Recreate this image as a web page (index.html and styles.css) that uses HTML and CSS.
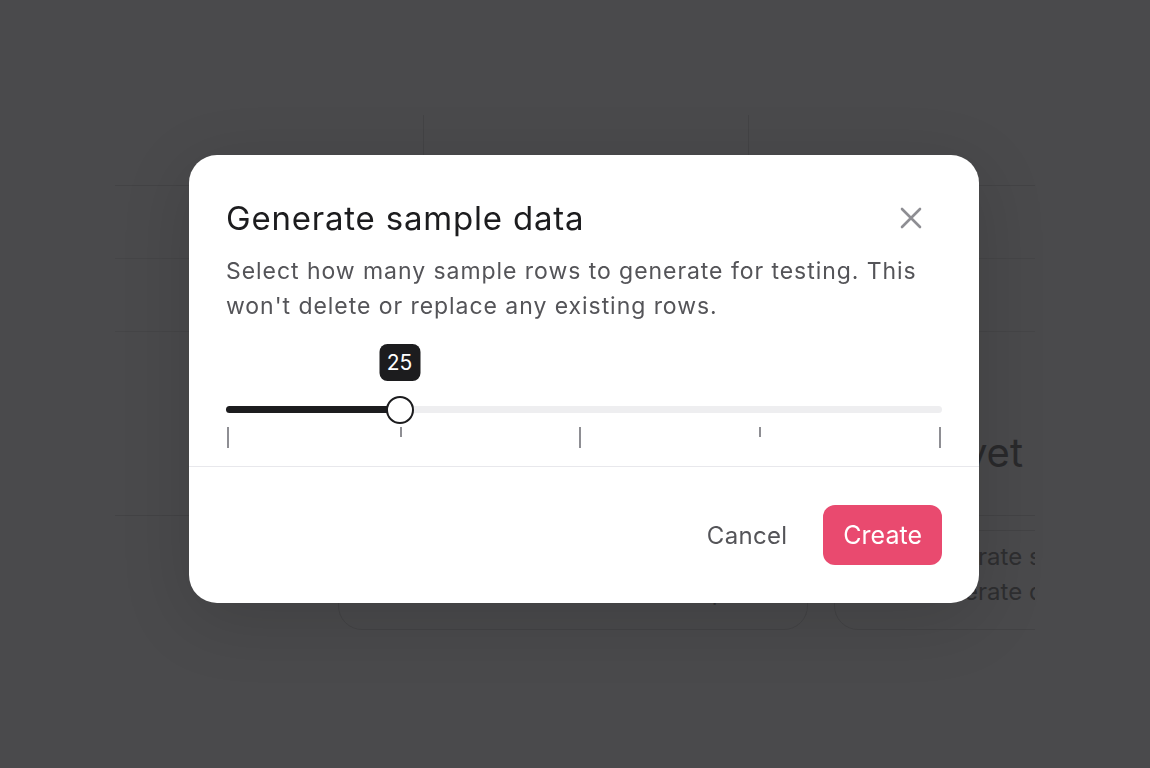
FILE: index.html
```html
<!DOCTYPE html>
<html>
<head>
    <title>Generate sample data</title>
    <link rel="stylesheet" href="styles.css">
</head>
<body>
    <div class="page">
        <div class="stats">
            <div class="stat stat-a"></div>
            <div class="stat stat-b"></div>
            <div class="stat stat-c"></div>
        </div>
        <div class="row"></div>
        <div class="row"></div>
        <div class="empty">
            <h2>You don't have any rows yet</h2>
        </div>
        <div class="cards">
            <div class="card">
                <p>Generate sample rows</p>
                <p>Generate data from a template</p>
            </div>
            <div class="card">
                <p>Generate sample rows</p>
                <p>Generate data from a template</p>
            </div>
        </div>
    </div>

    <div class="overlay">
        <div class="modal">
            <div class="modal-body">
                <div class="modal-header">
                    <h1 class="modal-title">Generate sample data</h1>
                    <button class="close-btn" aria-label="Close">
                        <svg width="22" height="22" viewBox="0 0 22 22">
                            <path d="M2 2 L20 20 M20 2 L2 20" stroke="#8e8e93" stroke-width="2.6" stroke-linecap="round" fill="none"/>
                        </svg>
                    </button>
                </div>
                <p class="modal-text">Select how many sample rows to generate for testing. This won't delete or replace any existing rows.</p>

                <div class="slider">
                    <div class="tooltip-row">
                        <div class="tooltip" style="left: 24.24%">25</div>
                    </div>
                    <div class="track">
                        <div class="track-fill" style="width: 24.24%"></div>
                        <div class="thumb" style="left: 24.24%"></div>
                    </div>
                    <div class="ticks">
                        <span class="tick" style="left: 0%"></span>
                        <span class="tick short" style="left: 24.24%"></span>
                        <span class="tick" style="left: 49.49%"></span>
                        <span class="tick short" style="left: 74.75%"></span>
                        <span class="tick" style="left: 100%"></span>
                    </div>
                </div>
            </div>
            <div class="modal-footer">
                <button class="cancel-btn">Cancel</button>
                <button class="create-btn">Create</button>
            </div>
        </div>
    </div>
</body>
</html>
```

FILE: styles.css
```css
body {
    margin: 0;
    height: 768px;
    overflow: hidden;
    background: #4a4a4c;
    font-family: Inter, "Noto Sans", sans-serif;
}

/* dimmed page behind the dialog */
.page {
    width: 920px;
    height: 768px;
    margin: 0 auto;
    padding-top: 115px;
    box-sizing: border-box;
    overflow: hidden;
}

.stats {
    display: flex;
    height: 70px;
    border-bottom: 1px solid #434345;
}

.stat-a {
    width: 308px;
    border-right: 1px solid #434345;
}

.stat-b {
    width: 324px;
    border-right: 1px solid #434345;
}

.stat-c {
    flex: 1;
}

.row {
    height: 72px;
    border-bottom: 1px solid #454547;
}

.empty {
    height: 184px;
    border-bottom: 1px solid #434345;
    box-sizing: border-box;
    padding-top: 97px;
}

.empty h2 {
    margin: 0;
    font-size: 40px;
    line-height: 48px;
    font-weight: 400;
    color: #29292b;
    text-align: right;
    padding-right: 12px;
    white-space: nowrap;
}

.cards {
    display: flex;
    gap: 26px;
    margin-top: 14px;
    padding-left: 223px;
}

.card {
    flex: 0 0 470px;
    height: 100px;
    box-sizing: border-box;
    border: 1px solid #434345;
    border-radius: 24px;
    padding: 8px 0 0 83px;
    overflow: hidden;
}

.card p {
    margin: 0;
    font-size: 24px;
    line-height: 35px;
    color: #2e2e30;
    white-space: nowrap;
}

/* dialog */
.overlay {
    position: fixed;
    inset: 0;
    display: flex;
    align-items: flex-start;
    padding: 155px 0 0 189px;
}

.modal {
    width: 790px;
    background: #fff;
    border-radius: 28px;
    box-shadow: 0 16px 70px rgba(0, 0, 0, 0.14);
    overflow: hidden;
}

.modal-body {
    padding: 43px 37px 0;
}

.modal-header {
    display: flex;
    align-items: center;
    justify-content: space-between;
}

.modal-title {
    margin: 0;
    font-size: 33px;
    line-height: 40px;
    font-weight: 400;
    letter-spacing: 0.8px;
    color: #1c1c1e;
}

.close-btn {
    border: none;
    background: none;
    padding: 0;
    margin-right: 20px;
    width: 22px;
    height: 22px;
    cursor: pointer;
}

.close-btn svg {
    display: block;
}

.modal-text {
    margin: 16px 0 0;
    font-size: 23px;
    line-height: 35px;
    letter-spacing: 0.95px;
    color: #545458;
}

.slider {
    margin-top: 20px;
    padding-bottom: 18px;
}

.tooltip-row {
    position: relative;
    height: 37px;
}

.tooltip {
    position: absolute;
    top: 0;
    transform: translateX(-50%);
    width: 41px;
    height: 37px;
    border-radius: 8px;
    background: #1c1c1e;
    color: #fff;
    font-size: 21px;
    line-height: 37px;
    text-align: center;
}

.track {
    position: relative;
    height: 7px;
    margin-top: 25px;
    border-radius: 4px;
    background: #eeeef0;
}

.track-fill {
    height: 100%;
    border-radius: 4px;
    background: #1c1c1e;
}

.thumb {
    position: absolute;
    top: 50%;
    width: 24px;
    height: 24px;
    border: 2px solid #1c1c1e;
    border-radius: 50%;
    background: #fff;
    transform: translate(-50%, -50%);
}

.ticks {
    position: relative;
    height: 21px;
    margin: 14px 2px 0;
}

.tick {
    position: absolute;
    top: 0;
    width: 2px;
    height: 21px;
    background: #8e8e93;
    transform: translateX(-50%);
}

.tick.short {
    height: 10px;
}

.modal-footer {
    display: flex;
    justify-content: flex-end;
    align-items: center;
    gap: 36px;
    padding: 38px 37px;
    border-top: 1px solid #e8e8ec;
}

.cancel-btn {
    border: none;
    background: none;
    padding: 0;
    font-family: inherit;
    font-size: 24px;
    letter-spacing: 0.3px;
    color: #545458;
    cursor: pointer;
}

.create-btn {
    height: 60px;
    padding: 0 20px;
    border: none;
    border-radius: 12px;
    background: #e94a6f;
    color: #fff;
    font-family: inherit;
    font-size: 25px;
    cursor: pointer;
}
```
